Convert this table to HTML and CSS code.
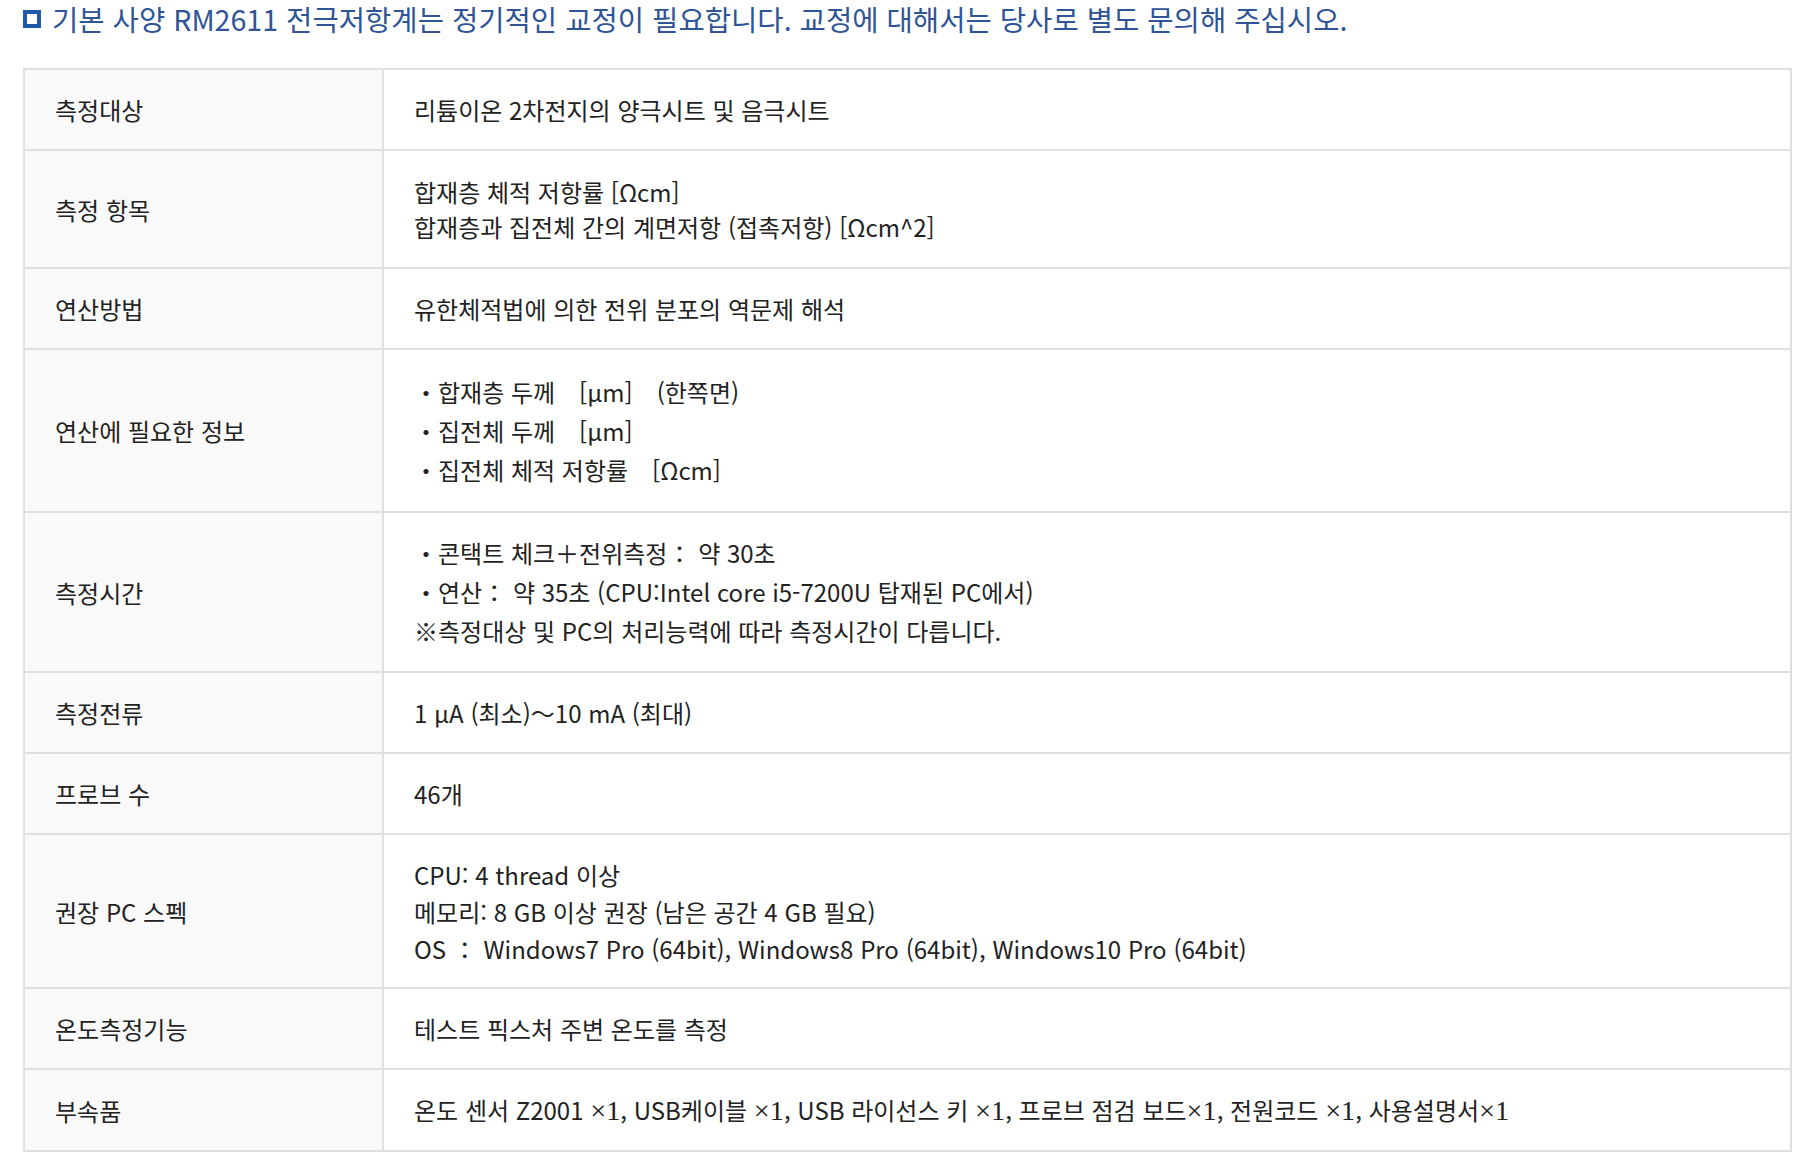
FILE: index.html
```html
<!doctype html>
<html lang="ko">
	<head>
		<meta charset="utf-8">
		<link rel="stylesheet" href="styles.css">
	</head>
	<body>
		<div class="spec">
			<!-- 제목 -->
			<h2 class="spec-title"><span class="spec-mark"></span>기본 사양 RM2611 전극저항계는 정기적인 교정이 필요합니다. 교정에 대해서는 당사로 별도 문의해 주십시오.</h2>
			<!-- 사양 표 -->
			<table class="spec-table">
				<tr>
					<th>측정대상</th>
					<td>리튬이온 2차전지의 양극시트 및 음극시트</td>
				</tr>
				<tr class="two">
					<th>측정 항목</th>
					<td>합재층 체적 저항률 [Ωcm]<br>합재층과 집전체 간의 계면저항 (접촉저항) [Ωcm^2]</td>
				</tr>
				<tr>
					<th>연산방법</th>
					<td>유한체적법에 의한 전위 분포의 역문제 해석</td>
				</tr>
				<tr class="list">
					<th>연산에 필요한 정보</th>
					<td>・합재층 두께　[μm]　(한쪽면)<br>・집전체 두께　[μm]<br>・집전체 체적 저항률　[Ωcm]</td>
				</tr>
				<tr class="list list-tight">
					<th>측정시간</th>
					<td>・콘택트 체크＋전위측정： 약 30초<br>・연산： 약 35초 (CPU:Intel core i5-7200U 탑재된 PC에서)<br>※측정대상 및 PC의 처리능력에 따라 측정시간이 다릅니다.</td>
				</tr>
				<tr>
					<th>측정전류</th>
					<td>1 μA (최소)～10 mA (최대)</td>
				</tr>
				<tr>
					<th>프로브 수</th>
					<td>46개</td>
				</tr>
				<tr class="three">
					<th>권장 PC 스펙</th>
					<td>CPU: 4 thread 이상<br>메모리: 8 GB 이상 권장 (남은 공간 4 GB 필요)<br>OS ： Windows7 Pro (64bit), Windows8 Pro (64bit), Windows10 Pro (64bit)</td>
				</tr>
				<tr>
					<th>온도측정기능</th>
					<td>테스트 픽스처 주변 온도를 측정</td>
				</tr>
				<tr class="last">
					<th>부속품</th>
					<td>온도 센서 Z2001 <span class="qty">×1</span>, USB케이블 <span class="qty">×1</span>, USB 라이선스 키 <span class="qty">×1</span>, 프로브 점검 보드<span class="qty">×1</span>, 전원코드 <span class="qty">×1</span>, 사용설명서<span class="qty">×1</span></td>
				</tr>
			</table>
		</div>
	</body>
</html>
```

FILE: styles.css
```css
* {
	margin: 0px;
	padding: 0px;
	box-sizing: border-box;
}
body {
	background: white;
	font-family: "Noto Sans CJK KR", "Noto Sans", sans-serif;
	color: #222;
}
.spec {
	padding: 0px 5px 0px 23px;
}
/* 제목 줄 */
.spec-title {
	display: flex;
	align-items: center;
	gap: 11px;
	font-size: 28.6px;
	font-weight: 400;
	line-height: 38px;
	color: #2f5597;
	margin-bottom: 30px;
}
.spec-mark {
	width: 18px;
	height: 18px;
	border: 4px solid #1f5aa8;
	background: white;
	flex-shrink: 0;
}
/* 사양 표 */
.spec-table {
	width: 100%;
	border-collapse: collapse;
	border: 2px solid #ddd;
	font-size: 24px;
	line-height: 33px;
}
.spec-table th,
.spec-table td {
	border: 2px solid #e0e0e0;
	padding: 23px 30px;
	text-align: left;
	vertical-align: middle;
	font-weight: 400;
}
.spec-table th {
	width: 359px;
	background: #f9f9f9;
}
.spec-table .two td {
	line-height: 35px;
}
.spec-table .list td {
	line-height: 39px;
	padding-top: 22px;
	padding-bottom: 22px;
}
.spec-table .list-tight td {
	padding-top: 20px;
	padding-bottom: 21px;
}
.spec-table .three td {
	line-height: 37px;
	padding-top: 21px;
	padding-bottom: 20px;
}
.spec-table .last td {
	padding-top: 23px;
	padding-bottom: 24px;
}
/* 수량 표기 */
.qty {
	font-family: "Liberation Serif", serif;
	font-size: 28.3px;
	line-height: 1;
}
```
